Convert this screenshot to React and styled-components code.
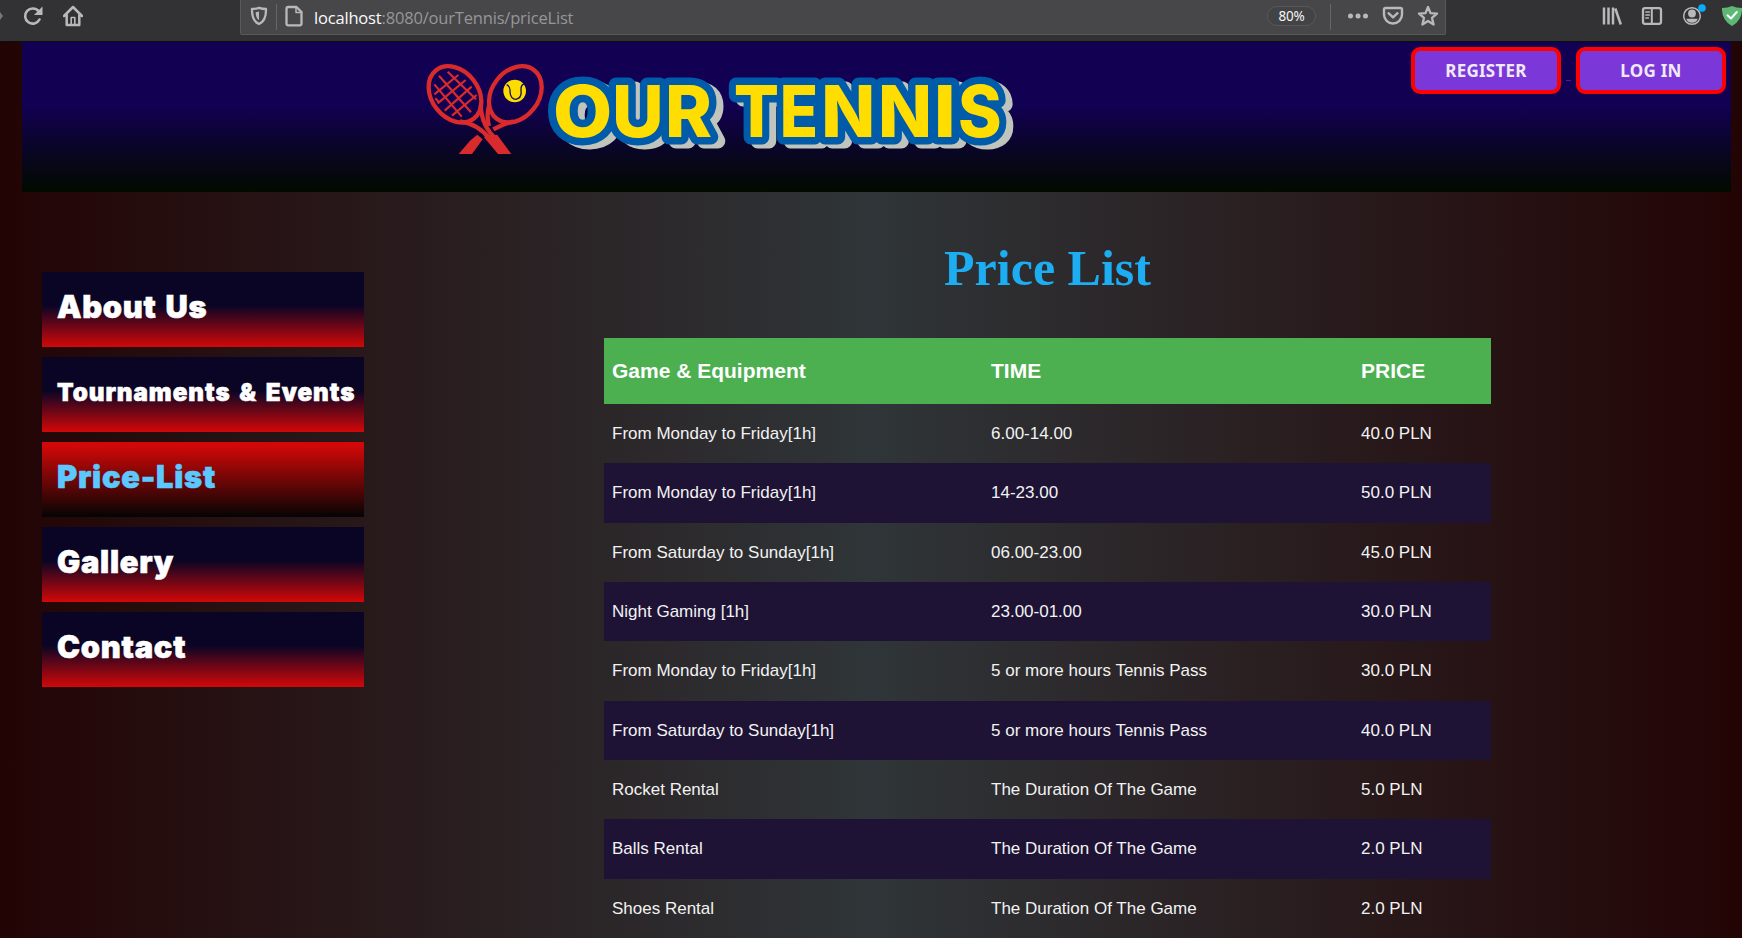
import React from "react";
import styled, { createGlobalStyle } from "styled-components";

const GlobalStyle = createGlobalStyle`
  * { box-sizing: border-box; }
  html, body { margin: 0; padding: 0; height: 938px; overflow: hidden; }
  body { font-family: "Liberation Sans", Arial, sans-serif; background: #220405; }
`;

const Screen = styled.div`
  width: 1742px;
  height: 938px;
  overflow: hidden;
  display: flex;
  flex-direction: column;
`;

const Toolbar = styled.div`
  height: 42px;
  flex: none;
  display: flex;
  align-items: flex-start;
  background: #323234;
  border-bottom: 1px solid #0d0c0e;
  font-family: "Noto Sans", "Open Sans", sans-serif;
`;

const Slot = styled.span`
  width: ${(p) => p.$w}px;
  height: 32px;
  margin-left: ${(p) => p.$gap || 0}px;
  flex: none;
  display: flex;
  align-items: center;
  justify-content: center;
  svg { display: block; flex: none; }
`;

const NavButtons = styled.div`
  width: 240px;
  flex: none;
  display: flex;
  align-items: center;
`;

const AddressBar = styled.div`
  width: 1206px;
  height: 35px;
  flex: none;
  display: flex;
  background: #474749;
  border: 1px solid #59595c;
  border-top: 0;
  border-radius: 0 0 2px 2px;
`;

const Divider = styled.span`
  width: 1px;
  height: 26px;
  margin-top: 4px;
  flex: none;
  background: #65656a;
`;

const Address = styled.span`
  flex: 1;
  padding-left: 3px;
  line-height: 36px;
  font-family: "Open Sans", "Noto Sans", sans-serif;
  font-size: 16.5px;
  letter-spacing: -0.18px;
  color: #969698;
  white-space: nowrap;
  b { font-weight: 400; color: #fafafa; }
`;

const ZoomLevel = styled.span`
  width: 49px;
  height: 20px;
  margin: 6px 14px 0 0;
  border-radius: 10px;
  border: 1px solid #58585b;
  background: #434345;
  color: #f4f4f4;
  font-size: 13.5px;
  line-height: 19px;
  text-align: center;
  letter-spacing: -0.2px;
`;

const Extensions = styled.div`
  display: flex;
  margin-left: 146px;
`;

const Page = styled.div`
  flex: 1;
  min-height: 0;
  display: flex;
  flex-direction: column;
  background: linear-gradient(to right, #230405, #2f3538 50%, #230405);
`;

const Header = styled.header`
  height: 150px;
  flex: none;
  margin: 0 11px 0 22px;
  padding: 0 5px 0 403px;
  display: flex;
  align-items: flex-start;
  background: linear-gradient(to bottom, #120052 42%, #020a00 98%);
`;

const LogoSvg = styled.svg`
  display: block;
  margin-top: 18px;
  flex: none;
`;

const Wordmark = styled.text`
  font-family: Inter, "Open Sans", sans-serif;
  font-weight: 800;
  font-size: 213px;
`;

const Account = styled.div`
  margin: 5px 0 0 auto;
  display: flex;
`;

const AccountButton = styled.a`
  width: 150px;
  height: 47px;
  border: 4px solid #ff0000;
  border-radius: 9px;
  background: #7b37d8;
  color: #f0eaf8;
  font-family: "Noto Sans", Tahoma, sans-serif;
  font-weight: 700;
  font-size: 17px;
  letter-spacing: 0.25px;
  line-height: 39px;
  text-align: center;
`;

const LinkGap = styled.span`
  width: 15px;
  height: 33px;
  padding: 0 5px;
  &::after { content: ""; display: block; height: 33px; border-bottom: 1px solid #551a8b; }
`;

const Body = styled.div`
  flex: 1;
  min-height: 0;
  display: flex;
`;

const Sidebar = styled.nav`
  width: 322px;
  flex: none;
  margin: 80px 240px 0 42px;
  display: flex;
  flex-direction: column;
  gap: 10px;
`;

const MenuItem = styled.a`
  height: 75px;
  padding: 0 0 ${(p) => (p.$small ? 5 : 6)}px 15px;
  display: flex;
  align-items: center;
  font-family: Inter, "Arial Black", sans-serif;
  font-weight: 900;
  font-size: ${(p) => (p.$small ? 24.2 : 30.8)}px;
  letter-spacing: ${(p) => (p.$small ? 0.95 : 0.75)}px;
  word-spacing: ${(p) => (p.$small ? 3 : 2)}px;
  -webkit-text-stroke: 0.6px currentColor;
  white-space: nowrap;
  color: ${(p) => (p.$active ? "#5bc8ff" : "#ffffff")};
  background: ${(p) =>
    p.$active
      ? "linear-gradient(to bottom, #d20808 5%, #050404)"
      : "linear-gradient(to bottom, #0a0524 45%, #d20808)"};
`;

const Content = styled.main`
  width: 887px;
  flex: none;
  display: flex;
  flex-direction: column;
`;

const Title = styled.h1`
  height: 147px;
  margin: 0;
  padding-top: 48px;
  font-family: "Liberation Serif", "Times New Roman", serif;
  font-size: 50px;
  line-height: 57px;
  text-align: center;
  color: #1cadf3;
`;

const PriceTable = styled.div`
  display: flex;
  flex-direction: column;
`;

const Row = styled.div`
  height: 59.33px;
  flex: none;
  padding: 0.4px 0 0 8px;
  display: grid;
  grid-template-columns: 379px 370px 1fr;
  align-items: center;
  color: #f2f2f2;
  font-size: 17px;
  white-space: nowrap;
  background: ${(p) => (p.$striped ? "#1e1235" : "transparent")};
`;

const HeadRow = styled(Row)`
  height: 66px;
  padding-top: 0;
  background: #4caf50;
  color: #ffffff;
  font-size: 21px;
  font-weight: 700;
`;

const stroke = { fill: "none", stroke: "#b9b9bb", strokeWidth: 2, strokeLinecap: "round", strokeLinejoin: "round" };

const ReloadIcon = () => (
  <svg width="20" height="22" viewBox="0 0 20 22">
    <path d="M16.5 14.5A7.6 7.6 0 1 1 15.6 6.2" {...stroke} strokeWidth="2.6" />
    <path d="M19.5 1.500V10H11Z" fill="#b9b9bb" />
  </svg>
);
const HomeIcon = () => (
  <svg width="20" height="22" viewBox="0 0 20 22">
    <path d="M1 11L10 2L19 11M3.700 10V20H16.300V10" {...stroke} strokeWidth="2.5" />
    <path d="M8.2 20V12.5H11.8V20Z" {...stroke} strokeWidth="1.6" />
  </svg>
);
const TrackingIcon = () => (
  <svg width="18" height="20" viewBox="0 0 18 20">
    <path d="M9 1.8C11.5 2.6 14 3 16 3C16.2 10 15 15.5 9 18C3 15.5 1.8 10 2 3C4 3 6.500 2.600 9 1.800Z" {...stroke} strokeWidth="2.300" />
    <path d="M9 5.500V14.300C6.500 12.500 5.800 10 5.700 6.200Z" fill="#b9b9bb" />
  </svg>
);
const PageIcon = () => (
  <svg width="20" height="22" viewBox="0 0 20 22">
    <path d="M4.300 2H12.500L17.500 7V18.500Q17.500 20.300 15.700 20.300H4.300Q2.500 20.300 2.500 18.500V3.800Q2.500 2 4.300 2Z" {...stroke} strokeWidth="2.300" />
    <path d="M12 2V7.500H17.500" {...stroke} strokeWidth="1.500" />
  </svg>
);
const DotsIcon = () => (
  <svg width="22" height="8" viewBox="0 0 22 8" fill="#b9b9bb">
    <circle cx="3.500" cy="4" r="2.500" /><circle cx="11" cy="4" r="2.500" /><circle cx="18.500" cy="4" r="2.500" />
  </svg>
);
const PocketIcon = () => (
  <svg width="22" height="20" viewBox="0 0 22 20">
    <path d="M3.500 2H18.500Q20 2 20 3.500V8.500A9 9 0 0 1 2 8.500V3.500Q2 2 3.500 2Z" {...stroke} strokeWidth="2.400" />
    <path d="M6.500 7.200L11 11.400L15.500 7.200" {...stroke} strokeWidth="2.400" />
  </svg>
);
const StarIcon = () => (
  <svg width="22" height="22" viewBox="0 0 22 22">
    <path d="M11 2L13.500 8.100L20 8.600L15 12.900L16.600 19.500L11 16L5.400 19.500L7 12.900L2 8.600L8.500 8.100Z" {...stroke} strokeWidth="2.300" />
  </svg>
);
const LibraryIcon = () => (
  <svg width="20" height="20" viewBox="0 0 20 20">
    <path d="M2 1.500V18.500M6.500 1.500V18.500M11 1.500V18.500M13.300 2.500L18.800 18.500" {...stroke} strokeWidth="2.500" strokeLinecap="butt" />
  </svg>
);
const SidebarIcon = () => (
  <svg width="22" height="20" viewBox="0 0 22 20">
    <rect x="2" y="2.200" width="18" height="15.600" rx="2" {...stroke} strokeWidth="2.300" />
    <path d="M10.800 2V18" {...stroke} />
    <path d="M4.800 6H8.500M4.800 9H8.500M4.800 12H7.500" {...stroke} strokeWidth="1.300" />
  </svg>
);
const ProfileIcon = () => (
  <svg width="26" height="28" viewBox="0 0 26 28">
    <circle cx="12" cy="14" r="8.300" {...stroke} strokeWidth="1.500" />
    <circle cx="12" cy="11.500" r="3.900" fill="#b9b9bb" />
    <path d="M6.300 16.800H17.700Q16.500 20.800 12 20.800Q7.500 20.800 6.300 16.800Z" fill="#b9b9bb" />
    <circle cx="22" cy="6" r="3.800" fill="#06adff" />
  </svg>
);
const GuardIcon = () => (
  <svg width="20" height="22" viewBox="0 0 20 22">
    <path d="M0 3Q6 3 10 1Q14 3 20 3Q20.500 15 10 21Q-.5 15 0 3Z" fill="#5cb874" />
    <path d="M5.500 10.200L9 13.500L14.800 7" {...stroke} stroke="#ffffff" />
  </svg>
);

const Logo = () => (
  <LogoSvg width="600" height="100" viewBox="45 30 1800 300">
    <g fill="none" stroke="#d92b2b" strokeWidth="13">
      <ellipse cx="135" cy="133" rx="70" ry="92" transform="rotate(-38 135 133)" />
      <ellipse cx="316" cy="133" rx="70" ry="92" transform="rotate(38 316 133)" />
      <path d="M212 165Q215 230 258 266M150 214Q205 222 238 266" />
      <path d="M238 165Q228 195 237 228M310 214Q280 222 250 238" />
      <path strokeWidth="6.5" d="M113 65L198 148M87 77L183 187M73 103L155 200M76 145L86 156M145 75L73 133M167 90L83 160M185 110L104 182M200 135L126 197" />
    </g>
    <path d="M230 255L262 255L304 312H264L222 262ZM202 254L218 268L186 312H146L180 272Z" fill="#d92b2b" />
    <circle cx="314" cy="123" r="34" fill="#fddd00" />
    <path d="M290 104Q302 110 300 126Q302 148 318 148Q336 144 333 122Q332 104 342 102" fill="none" stroke="#14105a" strokeWidth="4" />
    <use
      href="#wordmark"
      fill="#005ba8"
      stroke="#005ba8"
      strokeWidth="45"
      strokeLinejoin="round"
      style={{ filter: "drop-shadow(21px 12px 0 #bfc4bd)" }}
    />
    <g fill="#ffdd00">
      <Wordmark id="wordmark" y="261">
        {GLYPHS.map(([glyph, x, width], i) => (
          <tspan key={i} x={x} textLength={width} lengthAdjust="spacingAndGlyphs">{glyph}</tspan>
        ))}
      </Wordmark>
    </g>
  </LogoSvg>
);

/* letter, left edge, advance width */
const GLYPHS = [
  ["O", 429, 178],
  ["U", 606, 155],
  ["R", 765, 141],
  ["T", 971, 136],
  ["E", 1109, 115],
  ["N", 1234, 162],
  ["N", 1404, 162],
  ["I", 1571, 66],
  ["S", 1644, 131],
];

const MENU = [
  { label: "About Us" },
  { label: "Tournaments & Events", small: true },
  { label: "Price-List", active: true },
  { label: "Gallery" },
  { label: "Contact" },
];

const PRICES = [
  ["From Monday to Friday[1h]", "6.00-14.00", "40.0 PLN"],
  ["From Monday to Friday[1h]", "14-23.00", "50.0 PLN"],
  ["From Saturday to Sunday[1h]", "06.00-23.00", "45.0 PLN"],
  ["Night Gaming [1h]", "23.00-01.00", "30.0 PLN"],
  ["From Monday to Friday[1h]", "5 or more hours Tennis Pass", "30.0 PLN"],
  ["From Saturday to Sunday[1h]", "5 or more hours Tennis Pass", "40.0 PLN"],
  ["Rocket Rental", "The Duration Of The Game", "5.0 PLN"],
  ["Balls Rental", "The Duration Of The Game", "2.0 PLN"],
  ["Shoes Rental", "The Duration Of The Game", "2.0 PLN"],
];

export default function App() {
  return (
    <Screen>
      <GlobalStyle />
      <Toolbar>
        <NavButtons>
          <Slot $w={13}>
            <svg width="13" height="10" viewBox="0 0 13 10"><path d="M0 1L3 5L0 9Z" fill="#77777a" /></svg>
          </Slot>
          <Slot $w={40}><ReloadIcon /></Slot>
          <Slot $w={40}><HomeIcon /></Slot>
        </NavButtons>
        <AddressBar>
          <Slot $w={35}><TrackingIcon /></Slot>
          <Divider />
          <Slot $w={34}><PageIcon /></Slot>
          <Address><b>localhost</b>:8080/ourTennis/priceList</Address>
          <ZoomLevel>80%</ZoomLevel>
          <Divider />
          <Slot $w={35} $gap={9}><DotsIcon /></Slot>
          <Slot $w={35}><PocketIcon /></Slot>
          <Slot $w={35}><StarIcon /></Slot>
        </AddressBar>
        <Extensions>
          <Slot $w={40}><LibraryIcon /></Slot>
          <Slot $w={40}><SidebarIcon /></Slot>
          <Slot $w={42}><ProfileIcon /></Slot>
          <Slot $w={36}><GuardIcon /></Slot>
        </Extensions>
      </Toolbar>
      <Page>
        <Header>
          <Logo />
          <Account>
            <AccountButton>REGISTER</AccountButton>
            <LinkGap />
            <AccountButton>LOG IN</AccountButton>
          </Account>
        </Header>
        <Body>
          <Sidebar>
            {MENU.map((m) => (
              <MenuItem key={m.label} $small={m.small} $active={m.active}>{m.label}</MenuItem>
            ))}
          </Sidebar>
          <Content>
            <Title>Price List</Title>
            <PriceTable>
              <HeadRow>
                <span>Game &amp; Equipment</span>
                <span>TIME</span>
                <span>PRICE</span>
              </HeadRow>
              {PRICES.map(([game, time, price], i) => (
                <Row key={i} $striped={i % 2 === 1}>
                  <span>{game}</span>
                  <span>{time}</span>
                  <span>{price}</span>
                </Row>
              ))}
            </PriceTable>
          </Content>
        </Body>
      </Page>
    </Screen>
  );
}
